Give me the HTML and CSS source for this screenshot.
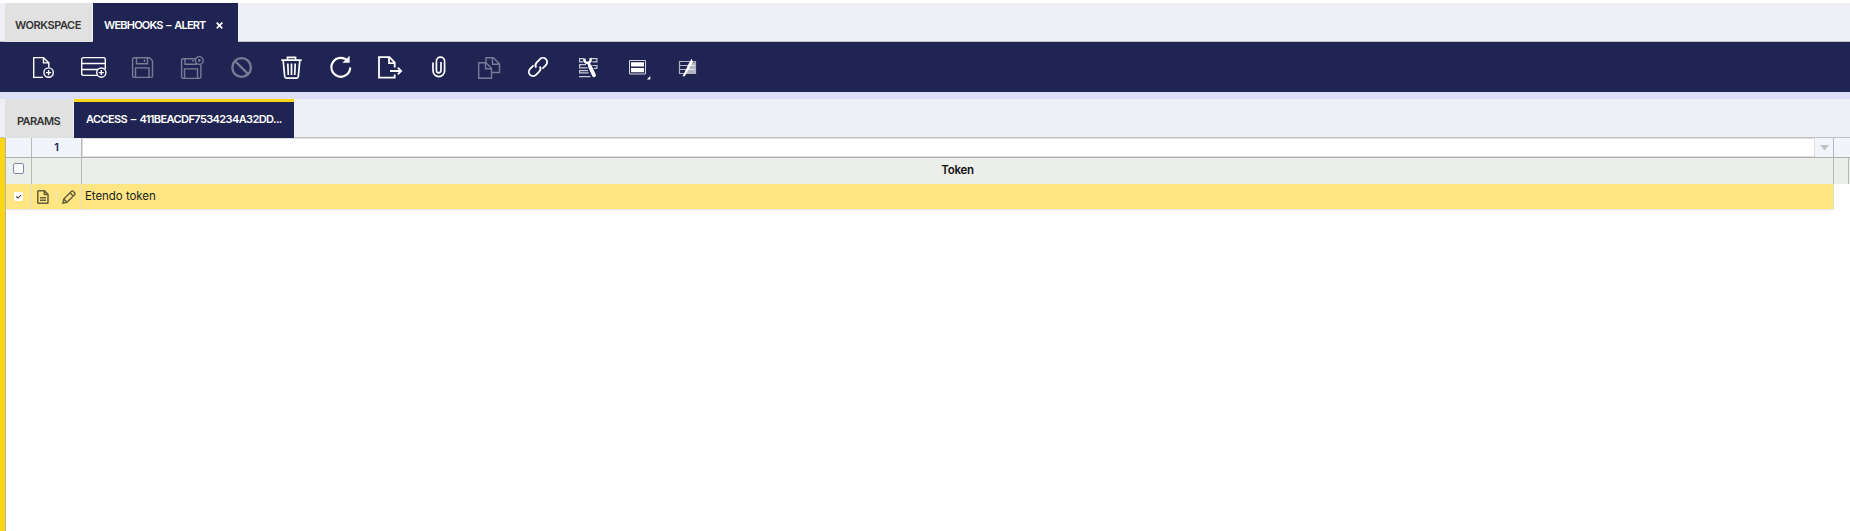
FILE: index.html
```html
<!DOCTYPE html>
<html lang="en">
<head>
<meta charset="utf-8">
<title>Webhooks - Alert</title>
<link rel="stylesheet" href="styles.css">
</head>
<body>
<nav class="tabs main-tabs">
  <div class="tab workspace"><span>WORKSPACE</span></div>
  <div class="tab active webhooks"><span>WEBHOOKS – ALERT</span>
    <svg class="close" width="7" height="7" viewBox="0 0 7 7"><path d="M.7.7l5.6 5.6M6.3.7L.7 6.3" stroke="#fff" stroke-width="1.7"/></svg>
  </div>
</nav>
<div class="toolbar">
  <svg viewBox="0 0 28 28"><path d="M13 24.400H3.700V4.600h9.800l5.300 5.300v4.400M13.500 4.600v5.300h5.300"/><circle cx="18.600" cy="19.600" r="4.700"/><path d="M16 19.600h5.200M18.600 17v5.200"/></svg>
  <svg viewBox="0 0 28 28"><path d="M17 22.400H3.500q-1.800 0-1.800-1.800V6.400q0-1.800 1.800-1.800h20q1.800 0 1.800 1.800V16M1.700 10.500h23.600M1.700 16.500H18"/><circle cx="21.300" cy="19.600" r="4.600"/><path d="M18.800 19.600h5M21.300 17.100v5"/></svg>
  <svg class="off" viewBox="0 0 28 28"><path d="M5 4.700h15.500l3 3V23q0 1.400-1.400 1.400H5q-1.400 0-1.400-1.400V6Q3.600 4.700 5 4.700zM7.500 4.700v6h11v-6M15.500 6.500v2.500M6.500 24.400v-9.500h13.500v9.500"/></svg>
  <svg class="off" viewBox="0 0 28 28"><path d="M17 5.700H4Q2.600 5.700 2.600 7v17q0 1.400 1.400 1.400h16.500q1.400 0 1.400-1.400V12M6 5.700v5.500h11V10M14 7v2M5.500 25.400v-9.500h13v9.500"/><circle cx="20.300" cy="7.500" r="3.900"/><circle cx="20.300" cy="7.500" r=".7"/></svg>
  <svg class="off" viewBox="0 0 28 28"><g stroke-width="2.300"><circle cx="13.600" cy="14.500" r="9.300"/><path d="M7 8l13.200 13.100"/></g></svg>
  <svg viewBox="0 0 28 28"><path d="M3.300 7.200h20.400M9.500 7V4.300h8V7M5.200 7.500l1.500 16q.2 1.700 1.700 1.700h10.200q1.500 0 1.700-1.700l1.500-16M9.800 10.500l.5 11.500M13.500 10.500V22M17.200 10.500L16.700 22" stroke-width="1.700"/></svg>
  <svg viewBox="0 0 28 28"><path d="M21 8.300A9.400 9.400 0 1 0 23.200 14.500" stroke-width="2.200"/><path class="solid" d="M22.600 2.800v7h-7.200z"/></svg>
  <svg viewBox="0 0 28 28"><path d="M17.700 21.500v3.200H2V4.200h10.500l5.200 5.300v5M12 4.200v6h5.700M13 18h11M20.800 14.600l3.400 3.400-3.400 3.400" stroke-width="1.800"/></svg>
  <svg viewBox="0 0 28 28"><path d="M7 9.500v8.300a5.800 5.800 0 0 0 11.600 0V8.200a4.100 4.100 0 0 0-8.200 0v9.300a2.300 2.300 0 0 0 4.600 0V9" stroke-width="1.700"/></svg>
  <svg class="off" viewBox="0 0 28 28"><path d="M10 9V4.700h7.500L23.500 11v8.500H15.500M16.500 4.700v6.500h7M2.700 9.700h7.300l5.500 5.500v10H2.700zM9.500 9.700v6h6"/></svg>
  <svg viewBox="0 0 28 28"><g transform="rotate(-45 13 14)" stroke-width="1.800"><path d="M11 9.800H6a4.200 4.200 0 0 0 0 8.400h4.500q3.400 0 4.100-3.200M15 18.200h5a4.200 4.200 0 0 0 0-8.400h-4.500q-3.400 0-4.100 3.200"/></g></svg>
  <svg viewBox="0 0 28 28"><path d="M8.500 5.600H4.600v3.300h3.500M16.500 5.600h5.400v3.300h-4.500M11 11.600H4.600v3.300h7.900M17.500 12.500h4.400v2.900h-3M13 17.600H4.600v2.300h9M4 23.600h11.500" stroke-width="1.200" opacity=".75"/><path d="M9.300 5.500q-.4 4.300 3.700 4.500 3.400-.7 2.500-5M13.300 10l5.200 12" stroke-width="2.500"/><path d="M15 13.500l4 8.700" stroke-width="3.800" stroke-linecap="round"/></svg>
  <svg viewBox="0 0 28 28"><path d="M5.500 7.500h16v13.500h-16z" stroke-width="1" opacity=".8"/><path class="solid" d="M7 9.300h13v4.200H7zM7 15h13v4.200H7zM26.300 23v3.500h-3.500z"/></svg>
  <svg viewBox="0 0 28 28"><path d="M5.500 8.500h16v12h-16zM6 12.500h15M6 16.500h15" stroke-width="1.200" opacity=".65"/><path class="solid" d="M15 9.500h6v10.500H11z" opacity=".65"/><path class="solid" d="M17.500 5.800L8.500 23.200h2.200L19 9z"/></svg>
</div>
<nav class="tabs sub-tabs">
  <div class="tab params"><span>PARAMS</span></div>
  <div class="tab active access"><span>ACCESS – 411BEACDF7534234A32DD...</span></div>
</nav>
<main class="panel">
  <div class="row filter">
    <div class="cell pick"></div>
    <div class="cell tools"><span class="count">1</span></div>
    <div class="cell wide"><div class="input"></div><div class="arrow"><svg width="9" height="6" viewBox="0 0 9 6"><path d="M0 0h9L4.500 5.500z" fill="#c1c1c1"/></svg></div></div>
    <div class="edge"></div>
  </div>
  <div class="row head">
    <div class="cell pick"><i class="box"></i></div>
    <div class="cell tools"></div>
    <div class="cell wide"><span>Token</span></div>
    <div class="edge"></div>
  </div>
  <div class="row record">
    <div class="cell pick"><svg class="checked" width="9" height="9" viewBox="0 0 9 9"><rect width="9" height="9" rx="1" fill="#fff"/><path d="M2.200 4.500L4 6.100 7 3.200" fill="none" stroke="#444" stroke-width="1.100"/></svg></div>
    <div class="cell tools">
      <svg width="12" height="14" viewBox="0 0 12 14"><path d="M.8 1.700Q.8.800 1.700.800h5.800L11 4.300v8.200q0 .8-.8.800H1.600q-.8 0-.8-.8zM7.300 1v3.500h3.500M3 7.700h6M3 10.300h6" fill="none" stroke="#655e3c" stroke-width="1.500"/></svg>
      <i class="split"></i>
      <svg width="14" height="14" viewBox="0 0 14 14"><path d="M1 13l.8-4L9.300 1.500q1-.9 2 0l1.200 1.200q.9 1 0 2L5 12.200zM8 2.800L11.200 6M1.800 9L5 12.200" fill="none" stroke="#655e3c" stroke-width="1.500"/></svg>
    </div>
    <div class="cell wide"><span>Etendo token</span></div>
  </div>
</main>
</body>
</html>
```
FILE: styles.css
```css
* { box-sizing: border-box; }
body {
  margin: 0;
  height: 531px;
  padding-top: 3px;
  display: flex;
  flex-direction: column;
  overflow: hidden;
  background: #fff;
  color: #222;
  font: 500 11px/18px Inter, "Liberation Sans", sans-serif;
}
svg { display: block; flex: none; }
.tabs {
  display: flex;
  gap: 1px;
  padding-left: 5px;
  flex: none;
  background: linear-gradient(#c0c1c5, #c0c1c5) bottom / 100% 1px no-repeat #eff0f6;
}
.tab { display: flex; background: #e1e1e1; color: #333; white-space: nowrap; font-weight: 600; }
.tab.active { background: #202452; color: #fff; }
.main-tabs { height: 39px; }
.main-tabs .tab { padding-top: 13px; }
.workspace { width: 87px; padding-left: 10px; letter-spacing: -0.45px; }
.webhooks { width: 145px; padding-left: 11px; letter-spacing: -0.8px; word-spacing: 1.5px; }
.webhooks span { width: 103px; }
.close { margin: 6px 0 0 9px; }
.toolbar {
  height: 50px;
  flex: none;
  display: flex;
  padding: 11px 0 0 30px;
  background: #202452;
}
.toolbar svg { width: 28px; height: 28px; margin-right: 22px; fill: none; stroke: #fff; stroke-width: 1.4; }
.toolbar svg:nth-child(even) { margin-right: 21px; }
.toolbar .off { opacity: .4; }
.toolbar .solid { fill: #fff; stroke: none; }
.sub-tabs { height: 46px; border-top: 7px solid #dddff7; }
.sub-tabs .tab { height: 39px; }
.params { width: 68px; padding: 13px 0 0 12px; letter-spacing: -0.6px; }
.tab.access { width: 220px; padding: 8px 0 0 12px; border-top: 3px solid #fcd615; letter-spacing: -0.6px; word-spacing: 1.5px; }
.panel { flex: 1; border-left: 5px solid #fcd615; background: linear-gradient(#aeb2b0, #aeb2b0) left / 1px 100% no-repeat; }
.row { display: flex; border-left: 1px solid #aeb2b0; }
.cell { flex: none; border-right: 1px solid #b5b9b4; display: flex; }
.pick { width: 26px; }
.tools { width: 50px; }
.wide { width: 1752px; }
.filter { height: 20px; background: #f1f5fb; border-bottom: 1px solid #adb0ad; }
.filter .edge, .head .edge { width: 15px; }
.count { margin: 0 auto; color: #202452; font-weight: 600; }
.input { flex: 1; background: #fff; border: 1px solid #ddd; }
.arrow { width: 18px; padding: 7px 0 0 5px; }
.head { height: 26px; background: #eceee9; }
.head .edge { border-right: 1px solid #b5b9b4; }
.box { width: 11px; height: 11px; margin: 5px 0 0 7px; border: 1px solid #8484b0; border-radius: 2px; background: #fff; }
.head .wide { justify-content: center; padding-top: 3px; font-size: 11.5px; font-weight: 600; color: #111; letter-spacing: -0.3px; }
.record { height: 26px; width: 1829px; background: #ffe683; border-bottom: 1px solid #e6e6e6; }
.record .cell { border-color: #e4dfc8; }
.checked { margin: 8px 0 0 8px; }
.record .tools { padding: 6px 0 0 5px; }
.split { width: 1px; height: 10px; margin: 1px 5px 0 7px; background: #e8e4d4; }
.record .wide { padding: 3px 0 0 3px; font-size: 11.5px; font-weight: 400; letter-spacing: -0.05px; }
```
